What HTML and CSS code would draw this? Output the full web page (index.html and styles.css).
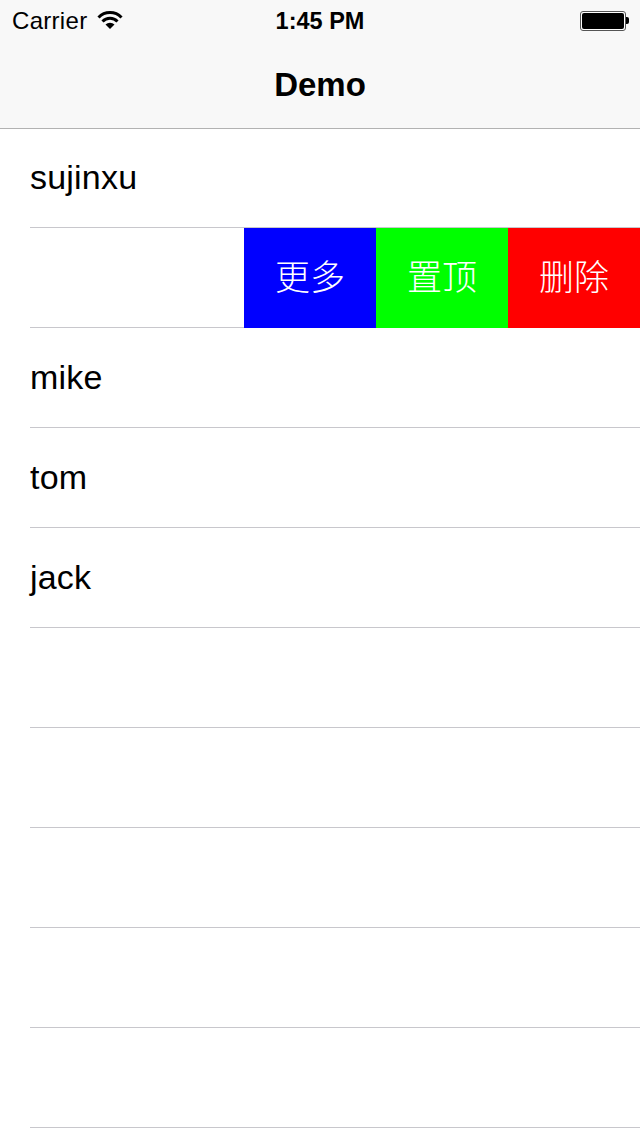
FILE: index.html
```html
<!DOCTYPE html>
<html lang="zh">
<head>
    <meta charset="UTF-8">
    <meta name="viewport" content="width=device-width, initial-scale=1.0">
    <title>Demo</title>
    <link rel="stylesheet" href="styles.css">
</head>
<body>
    <div class="header">
        <div class="status-bar">
            <div class="status-left">
                <span class="carrier">Carrier</span>
                <svg class="wifi" width="26" height="20" viewBox="0 0 26 20">
                    <path d="M1.5 7.5 A16 16 0 0 1 24.5 7.5" fill="none" stroke="#000" stroke-width="3"/>
                    <path d="M5.5 11.5 A10.5 10.5 0 0 1 20.5 11.5" fill="none" stroke="#000" stroke-width="3"/>
                    <path d="M13 19 L8.5 14.5 A6.5 6.5 0 0 1 17.5 14.5 Z" fill="#000"/>
                </svg>
            </div>
            <div class="status-time">1:45 PM</div>
            <div class="status-right">
                <div class="battery"><div class="battery-level"></div></div>
                <div class="battery-tip"></div>
            </div>
        </div>
        <div class="nav-bar">Demo</div>
    </div>

    <div class="list">
        <div class="row"><div class="row-inner">sujinxu</div></div>
        <div class="row">
            <div class="row-inner"></div>
            <div class="actions">
                <div class="action more">更多</div>
                <div class="action top">置顶</div>
                <div class="action del">删除</div>
            </div>
        </div>
        <div class="row"><div class="row-inner">mike</div></div>
        <div class="row"><div class="row-inner">tom</div></div>
        <div class="row"><div class="row-inner">jack</div></div>
        <div class="row"><div class="row-inner"></div></div>
        <div class="row"><div class="row-inner"></div></div>
        <div class="row"><div class="row-inner"></div></div>
        <div class="row"><div class="row-inner"></div></div>
        <div class="row"><div class="row-inner"></div></div>
    </div>
</body>
</html>
```

FILE: styles.css
```css
html, body {
    margin: 0;
    padding: 0;
}
body {
    font-family: 'Liberation Sans', Arial, 'Noto Sans CJK SC', sans-serif;
    background-color: white;
    color: black;
    width: 640px;
    height: 1136px;
    overflow: hidden;
}
.header {
    background-color: #f8f8f8;
    border-bottom: 1px solid #b2b2b2;
    height: 129px;
    box-sizing: border-box;
}
.status-bar {
    height: 40px;
    display: flex;
    align-items: center;
    justify-content: space-between;
    padding: 0 11px 0 12px;
    font-size: 24px;
    position: relative;
}
.status-left {
    display: flex;
    align-items: center;
    gap: 10px;
}
.carrier {
    letter-spacing: 0.3px;
    margin-top: 2px;
}
.status-time {
    position: absolute;
    left: 0;
    right: 0;
    top: 8px;
    text-align: center;
    font-weight: bold;
    font-size: 23.5px;
}
.status-right {
    display: flex;
    align-items: center;
    margin-top: 1px;
}
.battery {
    width: 46px;
    height: 20px;
    box-sizing: border-box;
    border: 1px solid #555;
    border-radius: 3px;
    background-color: white;
    padding: 1px;
}
.battery-level {
    background-color: black;
    height: 100%;
    border-radius: 2px;
}
.battery-tip {
    width: 3px;
    height: 7px;
    background-color: black;
    border-radius: 0 2px 2px 0;
}
.nav-bar {
    height: 88px;
    line-height: 89px;
    text-align: center;
    font-size: 33px;
    font-weight: bold;
}
.list {
    margin-top: -1px;
}
.row {
    height: 100px;
    padding-left: 30px;
    position: relative;
}
.row-inner {
    height: 100px;
    box-sizing: border-box;
    border-bottom: 1px solid #c8c7cc;
    line-height: 99px;
    font-size: 34px;
    letter-spacing: 0.2px;
}
.actions {
    position: absolute;
    top: 0;
    right: 0;
    height: 100px;
    display: flex;
}
.action {
    width: 132px;
    color: white;
    font-size: 35px;
    font-weight: 300;
    text-align: center;
    line-height: 100px;
}
.more {
    background-color: #0000ff;
}
.top {
    background-color: #00ff00;
}
.del {
    background-color: #ff0000;
}
```
